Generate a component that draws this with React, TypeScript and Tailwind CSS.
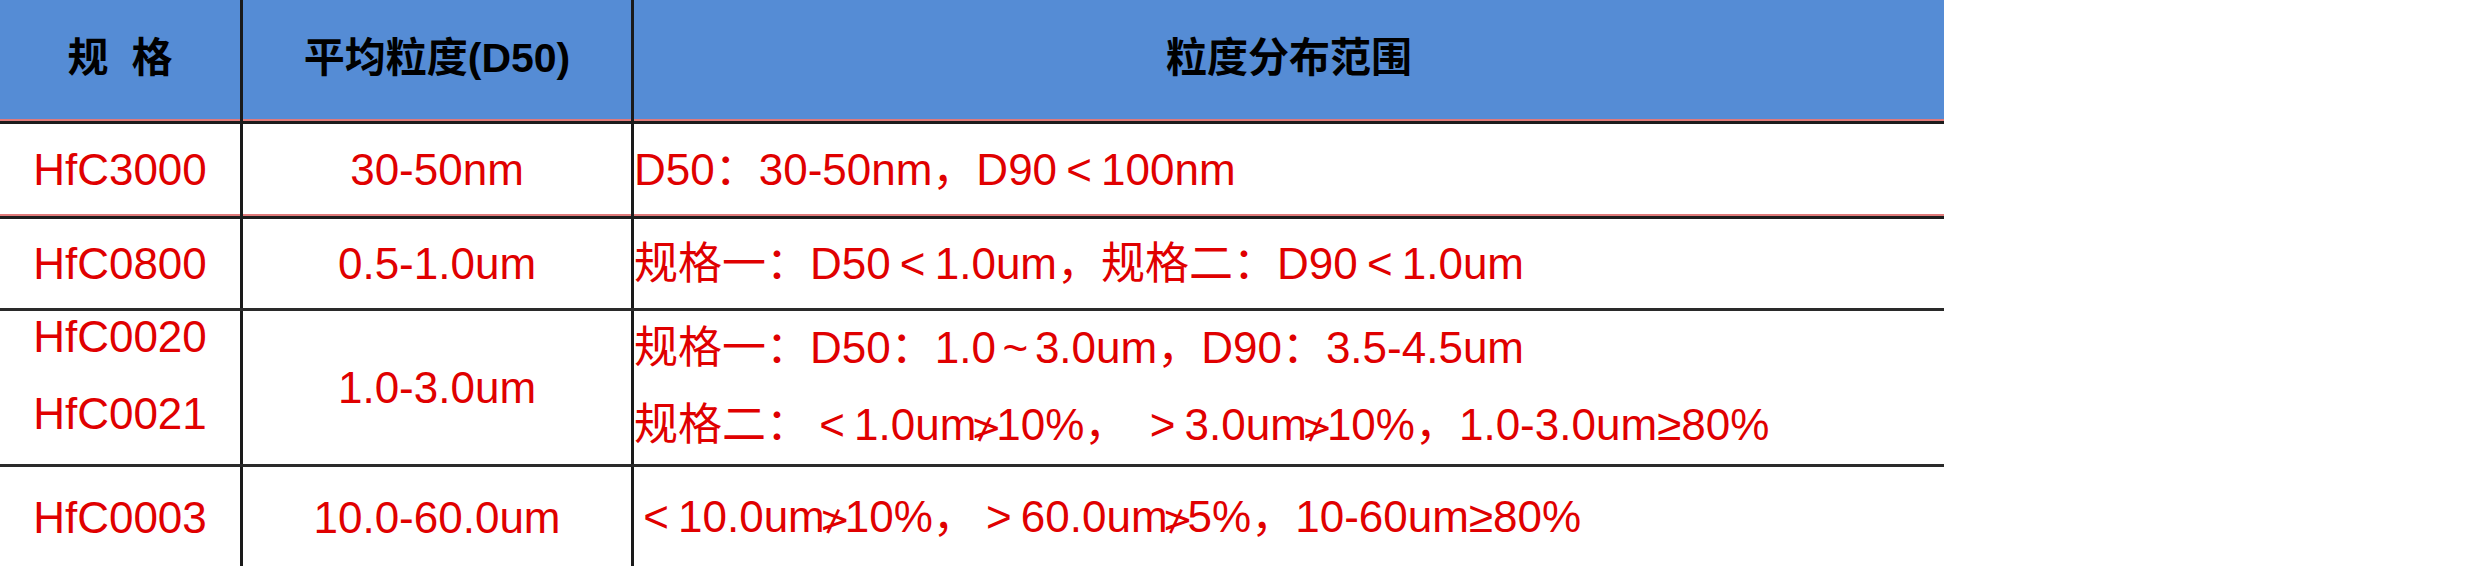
const font = "font-['Liberation_Sans','Noto_Sans_CJK_SC',sans-serif]";
const body = `${font} text-[44px] leading-[44px] text-[#e00000] whitespace-nowrap`;
const divider = "border-r-[3px] border-[#1a1a1a]";

// full-width slot holding a small half-width glyph, as in the source sheet
function Cmp({ ch, w = "w-[44px]" }: { ch: string; w?: string }) {
  return <span className={`inline-flex ${w} justify-center`}>{ch}</span>;
}

function NotGt() {
  return (
    <span className="inline-flex w-[20px] justify-center font-['DejaVu_Sans',sans-serif] text-[37px]">
      ≯
    </span>
  );
}

function Row({
  h,
  line,
  a,
  b,
  c,
}: {
  h: string;
  line: string;
  a: React.ReactNode;
  b: React.ReactNode;
  c: React.ReactNode;
}) {
  return (
    <div className={`grid grid-cols-[243px_391px_1310px] bg-white ${h} ${line}`}>
      <div className={`flex items-center justify-center ${divider}`}>{a}</div>
      <div className={`flex items-center justify-center ${divider}`}>{b}</div>
      <div className="flex items-center">{c}</div>
    </div>
  );
}

export default function App() {
  return (
    <div className="min-h-[566px] w-[2480px] bg-white">
      <div className="w-[1944px]">
        {/* header */}
        <div className="grid h-[124px] grid-cols-[243px_391px_1310px] border-b-[3px] border-[#1c1c1c] bg-[#558cd5] shadow-[inset_0_-2px_0_#e07a7a]">
          <div className={`flex items-center justify-center pb-[3px] ${divider} ${font} text-[41px] font-bold text-black`}>
            <span>规</span>
            <span className="ml-[23px]">格</span>
          </div>
          <div className={`flex items-center justify-center pb-[3px] ${divider} ${font} text-[41px] font-bold text-black`}>
            平均粒度(D50)
          </div>
          <div className={`flex items-center justify-center pb-[3px] ${font} text-[41px] font-bold text-black`}>
            粒度分布范围
          </div>
        </div>

        <Row
          h="h-[95px]"
          line="border-b-[3px] border-[#1c1c1c] shadow-[inset_0_-2px_0_#e07a7a]"
          a={<span className={body}>HfC3000</span>}
          b={<span className={body}>30-50nm</span>}
          c={
            <span className={body}>
              D50：30-50nm，D90<Cmp ch="<" />100nm
            </span>
          }
        />

        <Row
          h="h-[92px]"
          line="border-b-[3px] border-[#2a2a2a]"
          a={<span className={body}>HfC0800</span>}
          b={<span className={body}>0.5-1.0um</span>}
          c={
            <span className={body}>
              规格一：D50<Cmp ch="<" />1.0um，规格二：D90<Cmp ch="<" />1.0um
            </span>
          }
        />

        {/* two-line row */}
        <div className="grid h-[156px] grid-cols-[243px_391px_1310px] border-b-[3px] border-[#2a2a2a] bg-white">
          <div className={`flex flex-col items-center gap-[33px] pt-[4px] ${divider}`}>
            <span className={body}>HfC0020</span>
            <span className={body}>HfC0021</span>
          </div>
          <div className={`flex items-center justify-center ${divider}`}>
            <span className={body}>1.0-3.0um</span>
          </div>
          <div className="flex flex-col justify-center gap-[33px]">
            <span className={body}>
              规格一：D50：1.0<Cmp ch="~" w="w-[39px]" />3.0um，D90：3.5-4.5um
            </span>
            <span className={body}>
              规格二：<Cmp ch="<" />1.0um<NotGt />10%， <Cmp ch=">" />3.0um<NotGt />10%，1.0-3.0um≥80%
            </span>
          </div>
        </div>

        <Row
          h="h-[102px]"
          line=""
          a={<span className={body}>HfC0003</span>}
          b={<span className={body}>10.0-60.0um</span>}
          c={
            <span className={body}>
              <Cmp ch="<" />10.0um<NotGt />10%，<Cmp ch=">" />60.0um<NotGt />5%，10-60um≥80%
            </span>
          }
        />
      </div>
    </div>
  );
}
